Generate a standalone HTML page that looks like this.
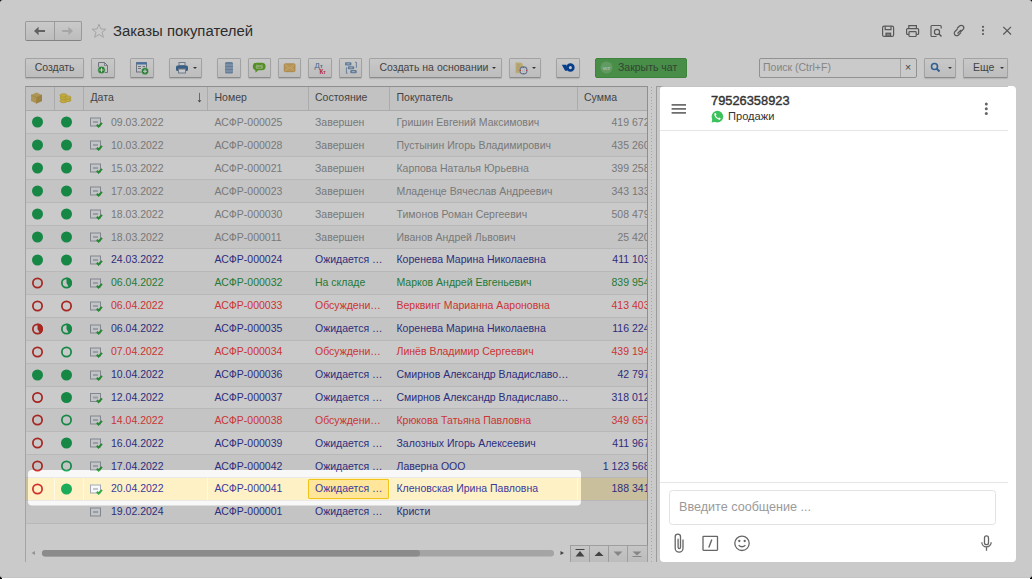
<!DOCTYPE html>
<html><head><meta charset="utf-8">
<style>
*{box-sizing:border-box;margin:0;padding:0}
html,body{width:1032px;height:579px;overflow:hidden;background:#000}
body{font-family:"Liberation Sans",sans-serif;position:relative}
#app{position:absolute;left:0;top:0;width:1032px;height:578px;background:#fff;border-radius:3px;overflow:hidden}
.abs{position:absolute}
.btn{position:absolute;top:58px;height:19.5px;border:1px solid #cdcdcd;border-bottom-color:#b0b0b0;border-radius:1.5px;background:linear-gradient(#fdfdfd,#efefef);box-shadow:0 1px 1px rgba(0,0,0,0.12)}
.btxt{position:absolute;top:1px;font-size:10.5px;color:#555;line-height:14px;white-space:nowrap}
.dd{position:absolute;width:0;height:0;border-left:2px solid transparent;border-right:2px solid transparent;border-top:2.5px solid #444;top:8px}
.hsep{position:absolute;top:87px;width:1px;height:23px;background:#d8d8d8}
.htxt{position:absolute;top:91px;line-height:12px;font-size:10.5px;color:#555;white-space:nowrap}
.t{position:absolute;line-height:12px;font-size:10.5px;white-space:nowrap}
#clip{position:absolute;left:0;top:0;width:1032px;height:579px;clip-path:inset(87px 385px 34px 26px)}
svg{position:absolute;overflow:visible}
</style></head><body>
<div id="app">
  <!-- nav -->
  <div class="abs" style="left:25px;top:21px;width:57px;height:19.5px;border:1px solid #c2c2c2;border-bottom-color:#a6a6a6;border-radius:2px;background:linear-gradient(#fff,#eee)"></div>
  <div class="abs" style="left:54px;top:22px;width:1px;height:17.5px;background:#c4c4c4"></div>
  <svg style="left:0;top:0" width="120" height="50"><path d="M34 31 L38.6 26.7 V29.9 H45 V32.1 H38.6 V35.3 Z" fill="#7c7c7c"/><path d="M73 31 L68.4 26.7 V29.9 H62.2 V32.1 H68.4 V35.3 Z" fill="#d2d2d2"/></svg>
  
  <svg style="left:91px;top:23px" width="16" height="16" viewBox="0 0 16 16"><path d="M8 1.2 L9.9 6 L15 6.2 L11 9.3 L12.4 14.3 L8 11.5 L3.6 14.3 L5 9.3 L1 6.2 L6.1 6 Z" fill="none" stroke="#d0d0d0" stroke-width="1"/></svg>
  <div class="abs" style="left:113px;top:22px;font-size:14.9px;color:#3a3a3a;line-height:18px;white-space:nowrap">Заказы покупателей</div>

  <!-- top right icons -->
  <svg style="left:0;top:0" width="1032" height="50">
    <g fill="none" stroke="#707070" stroke-width="1.2">
      <rect x="882.6" y="26.2" width="11" height="10.2" rx="1.5"/>
      <path d="M885.2 26.2 V29.6 H891 V26.2"/>
      <rect x="886" y="33.2" width="4.6" height="3.2" fill="#a0a0a0"/>
      <path d="M908.8 28.6 V25.6 H916.4 V28.6"/>
      <path d="M909 34.4 H907.6 A1 1 0 0 1 906.6 33.4 V29.6 A1 1 0 0 1 907.6 28.6 H917.6 A1 1 0 0 1 918.6 29.6 V33.4 A1 1 0 0 1 917.6 34.4 H916.2"/>
      <rect x="909" y="31.6" width="7.2" height="4.9" rx="0.8"/>
      <path d="M941.2 28.5 V26.5 A1 1 0 0 0 940.2 25.5 H932 A1 1 0 0 0 931 26.5 V35.5 A1 1 0 0 0 932 36.5 H936.5"/>
      <circle cx="937" cy="32" r="2.6"/>
      <path d="M938.8 33.8 L941.5 36.5" stroke-width="1.5"/>
      <path d="M957.5 29 L955 31.5 A2.3 2.3 0 0 0 958.5 35 L961 32.5 M960.5 32 L963 29.5 A2.3 2.3 0 0 0 959.5 26 L957 28.5 M957.5 33.5 L961 30"/>
      <path d="M1003.3 26.8 L1011 34.5 M1011 26.8 L1003.3 34.5"/>
    </g>
    <g fill="#707070"><circle cx="983" cy="26.8" r="1.1"/><circle cx="983" cy="30.4" r="1.1"/><circle cx="983" cy="34" r="1.1"/></g>
  </svg>

  <!-- toolbar -->
  <div class="btn" style="left:25px;width:59px"><span class="btxt" style="left:8.7px">Создать</span></div>
  <div class="btn" style="left:91px;width:24px"></div>
  <div class="btn" style="left:130px;width:24px"></div>
  <div class="btn" style="left:169px;width:33px"><div class="dd" style="left:23px"></div></div>
  <div class="btn" style="left:217px;width:24px"></div>
  <div class="btn" style="left:248px;width:23px"></div>
  <div class="btn" style="left:278px;width:23px"></div>
  <div class="btn" style="left:308px;width:24px"></div>
  <div class="btn" style="left:339px;width:23px"></div>
  <div class="btn" style="left:369px;width:133px"><span class="btxt" style="left:9.5px">Создать на основании</span><div class="dd" style="left:122px"></div></div>
  <div class="btn" style="left:509px;width:32px"><div class="dd" style="left:22px"></div></div>
  <div class="btn" style="left:556px;width:24px"></div>
  <div class="abs" style="left:595px;top:58px;width:92px;height:20px;border-radius:2px;background:#5cb35c;border:1px solid #4ea64e"><span class="btxt" style="left:22px;color:#415641">Закрыть чат</span></div>
  <svg style="left:0;top:0" width="1032" height="90">
    <!-- doc + plus -->
    <path d="M98.5 62.5 H104.5 L107.5 65.5 V72.5 H98.5 Z" fill="#f6f6f6" stroke="#8a93a0" stroke-width="1"/><path d="M104.5 62.5 V65.5 H107.5" fill="none" stroke="#8a93a0" stroke-width="0.8"/>
    <circle cx="101.5" cy="70" r="3.8" fill="#2e9e3c" stroke="#fff" stroke-width="0.6"/><path d="M99.3 70 H103.7 M101.5 67.8 V72.2" stroke="#fff" stroke-width="1.1"/>
    <!-- window + plus -->
    <rect x="136.5" y="62.5" width="10" height="9.5" fill="#f4f6f8" stroke="#8a93a0"/>
    <rect x="136.5" y="62.5" width="10" height="2" fill="#5a8fd0"/>
    <path d="M138 66.5 H141 M138 68.5 H141 M142.5 66.5 H145" stroke="#8a93a0"/>
    <circle cx="145" cy="71.2" r="3.7" fill="#2e9e3c" stroke="#fff" stroke-width="0.6"/><path d="M143 71.2 H147 M145 69.2 V73.2" stroke="#fff" stroke-width="1.1"/>
    <!-- printer -->
    <rect x="179" y="62.5" width="6" height="3" fill="#fff" stroke="#8a9ab0"/>
    <rect x="176" y="65.5" width="12" height="5.5" rx="1.5" fill="#4a78a8"/>
    <rect x="178.5" y="69" width="7" height="4" fill="#fff" stroke="#8a9ab0"/>
    <!-- db -->
    <rect x="225" y="62" width="8" height="11.5" rx="1.5" fill="#7f9fc0"/>
    <path d="M225 65 H233 M225 68 H233 M225 71 H233" stroke="#c8d6e4" stroke-width="0.8"/>
    <!-- sms -->
    <rect x="252.8" y="62.7" width="12.8" height="7.5" rx="3.7" fill="#6bb52e"/><path d="M255.2 69.5 L255.6 72.8 L258.6 69.8 Z" fill="#6bb52e"/>
    <path d="M256 65.2 h1.6 v1.1 h-1.6 v1.1 h1.6 M258.4 67.4 v-2.2 l0.9 1.2 l0.9 -1.2 v2.2 M262.6 65.2 h-1.6 v1.1 h1.6 v1.1 h-1.6 M256 68.3 H262.6" fill="none" stroke="#eaf5e0" stroke-width="0.55"/>
    <!-- envelope -->
    <rect x="284.2" y="63.8" width="10.8" height="7.9" rx="1" fill="#e9bd6e" stroke="#cf9f4f" stroke-width="0.7"/>
    <path d="M284.8 64.4 L289.6 68.4 L294.4 64.4 M284.8 71.2 L288.2 68 M294.4 71.2 L291 68" fill="none" stroke="#f6dca6" stroke-width="0.7"/>
    <!-- Dt Kt -->
    <text x="314.6" y="67.8" font-size="7.8" fill="#5a82b0" font-family="Liberation Sans">Д</text><text x="320" y="67.8" font-size="5.5" fill="#5a82b0" font-family="Liberation Sans" font-weight="bold">т</text>
    <text x="319.4" y="73.6" font-size="6.3" fill="#e03434" font-family="Liberation Sans" font-weight="bold">К</text><text x="323.2" y="73.6" font-size="5" fill="#e03434" font-family="Liberation Sans" font-weight="bold">т</text>
    <!-- structure -->
    <g fill="#7699bf"><rect x="345" y="62.3" width="6.4" height="3.1" rx="1"/><rect x="347.8" y="66.2" width="6.4" height="3.1" rx="1"/><rect x="350.3" y="70.1" width="6.4" height="3.1" rx="1"/></g>
    <g stroke="#e8eef5" stroke-width="0.8"><path d="M346.6 63.85 H349.8 M349.4 67.75 H352.6 M351.9 71.65 H355.1"/></g>
    <path d="M346.4 67.5 V73.3 H347.6 M355 62.3 H356.4 V67.8" fill="none" stroke="#7699bf" stroke-width="0.9"/>
    <!-- yellow doc + lifebuoy -->
    <path d="M515.5 62.5 H520.5 Q523 63 523 65.5 V73.3 H515.5 Z" fill="#ead796"/>
    <path d="M516.8 64.8 H520 M516.8 66.8 H520 M516.8 68.8 H519 M516.8 70.8 H519" stroke="#d6c078" stroke-width="0.7"/>
    <circle cx="523.5" cy="70.4" r="3.5" fill="#fbfbfb" stroke="#7d8fb5" stroke-width="1.1"/>
    <circle cx="523.5" cy="70.4" r="1.4" fill="none" stroke="#c9d2e2" stroke-width="0.6"/>
    <g fill="#e05050"><circle cx="523.5" cy="67.3" r="0.6"/><circle cx="523.5" cy="73.5" r="0.6"/><circle cx="520.4" cy="70.4" r="0.6"/><circle cx="526.6" cy="70.4" r="0.6"/></g>
    <!-- yookassa -->
    <path d="M561.8 64.7 H566.4 L567.4 70.8 H565.1 Z" fill="#0a4fb0"/>
    <circle cx="570.4" cy="67.6" r="2.9" fill="none" stroke="#0a4fb0" stroke-width="2.7"/>
    <!-- wz circle -->
    <circle cx="606.5" cy="67.6" r="6" fill="#7cc47c"/>
    <text x="606.5" y="69.8" font-size="6.2" fill="#e6f3e6" text-anchor="middle" font-family="Liberation Sans">wz</text>
  </svg>

  <!-- search -->
  <div class="abs" style="left:759px;top:58px;width:158px;height:20px;border:1px solid #b8b8b8;border-radius:2px;background:#fff"><span class="btxt" style="left:3px;color:#a8a8a8">Поиск (Ctrl+F)</span><div class="abs" style="left:140px;top:0;width:1px;height:18px;background:#cfcfcf"></div><span class="btxt" style="left:145px;color:#555">×</span></div>
  <div class="btn" style="left:924px;width:32px"><div class="dd" style="left:23px"></div></div>
  <svg style="left:0;top:0" width="1032" height="90"><circle cx="934.5" cy="66.5" r="3" fill="none" stroke="#3d78b8" stroke-width="1.6"/><path d="M936.6 68.6 L939.5 71.5" stroke="#3d78b8" stroke-width="2"/></svg>
  <div class="btn" style="left:963px;width:45px"><span class="btxt" style="left:9px">Еще</span><div class="dd" style="left:36px"></div></div>

  <!-- grid -->
  <div class="abs" style="left:25px;top:86px;width:623px;height:459px;border:1px solid #b4b4b4;border-left-color:#cfcfcf;border-bottom:none"></div>
  <div class="abs" style="left:25px;top:545px;width:1px;height:17px;background:#cfcfcf"></div>
  <div class="abs" style="left:26px;top:87px;width:621px;height:23px;background:#f5f5f5"></div>
  <div class="abs" style="left:26px;top:110px;width:621px;height:1px;background:#d8d8d8"></div>
  <div class="hsep" style="left:54px"></div>
  <div class="hsep" style="left:83px"></div>
  <div class="hsep" style="left:207px"></div>
  <div class="hsep" style="left:308px"></div>
  <div class="hsep" style="left:389px"></div>
  <div class="hsep" style="left:577px"></div>
  <span class="htxt" style="left:90.5px">Дата</span>
  <svg style="left:0;top:0" width="1032" height="110"><path d="M199.5 92.8 V100.6" stroke="#7d8894" stroke-width="1"/><path d="M197.6 100.2 H201.4 L199.5 102.4 Z" fill="#555d66"/></svg>
  <span class="htxt" style="left:214.5px">Номер</span>
  <span class="htxt" style="left:315px">Состояние</span>
  <span class="htxt" style="left:396.5px">Покупатель</span>
  <span class="htxt" style="left:584px">Сумма</span>
  <svg style="left:0;top:0" width="1032" height="110">
    <path d="M31 95 L36.5 92.5 L42 95 V101 L36.5 103.5 L31 101 Z" fill="#d9bd6e"/><path d="M36.5 97.5 L42 95 V101 L36.5 103.5 Z" fill="#c4a455"/>
    <path d="M31 95 L36.5 97.5 L42 95 M36.5 97.5 V103.5" fill="none" stroke="#c8a850" stroke-width="0.8"/>
    <g fill="#f0d858" stroke="#d8b830" stroke-width="0.7">
      <ellipse cx="63.5" cy="101" rx="3.5" ry="1.8"/><ellipse cx="63.5" cy="98" rx="3.5" ry="1.8"/><ellipse cx="63.5" cy="95.5" rx="3.5" ry="1.8"/>
      <ellipse cx="68" cy="100" rx="3" ry="1.6"/><ellipse cx="68" cy="97.5" rx="3" ry="1.6"/>
    </g>
  </svg>

  <div id="clip">
<div class="abs" style="left:26px;top:133px;width:622px;height:1px;background:#e9e9e9"></div>
<div class="t" style="left:111px;top:116.0px;color:#999999">09.03.2022</div>
<div class="t" style="left:214.5px;top:116.0px;color:#999999">АСФР-000025</div>
<div class="t" style="left:315px;top:116.0px;color:#999999">Завершен</div>
<div class="t" style="left:396.5px;top:116.0px;color:#999999">Гришин Евгений Максимович</div>
<div class="t" style="right:382.5px;top:116.0px;color:#999999;text-align:right">419 672</div>
<div class="abs" style="left:26px;top:134px;width:622px;height:22px;background:#f8f8f8"></div>
<div class="abs" style="left:26px;top:156px;width:622px;height:1px;background:#e9e9e9"></div>
<div class="t" style="left:111px;top:138.9px;color:#999999">10.03.2022</div>
<div class="t" style="left:214.5px;top:138.9px;color:#999999">АСФР-000028</div>
<div class="t" style="left:315px;top:138.9px;color:#999999">Завершен</div>
<div class="t" style="left:396.5px;top:138.9px;color:#999999">Пустынин Игорь Владимирович</div>
<div class="t" style="right:382.5px;top:138.9px;color:#999999;text-align:right">435 260</div>
<div class="abs" style="left:26px;top:179px;width:622px;height:1px;background:#e9e9e9"></div>
<div class="t" style="left:111px;top:161.8px;color:#999999">15.03.2022</div>
<div class="t" style="left:214.5px;top:161.8px;color:#999999">АСФР-000021</div>
<div class="t" style="left:315px;top:161.8px;color:#999999">Завершен</div>
<div class="t" style="left:396.5px;top:161.8px;color:#999999">Карпова Наталья Юрьевна</div>
<div class="t" style="right:382.5px;top:161.8px;color:#999999;text-align:right">399 258</div>
<div class="abs" style="left:26px;top:180px;width:622px;height:22px;background:#f8f8f8"></div>
<div class="abs" style="left:26px;top:202px;width:622px;height:1px;background:#e9e9e9"></div>
<div class="t" style="left:111px;top:184.7px;color:#999999">17.03.2022</div>
<div class="t" style="left:214.5px;top:184.7px;color:#999999">АСФР-000023</div>
<div class="t" style="left:315px;top:184.7px;color:#999999">Завершен</div>
<div class="t" style="left:396.5px;top:184.7px;color:#999999">Младенце Вячеслав Андреевич</div>
<div class="t" style="right:382.5px;top:184.7px;color:#999999;text-align:right">343 133</div>
<div class="abs" style="left:26px;top:225px;width:622px;height:1px;background:#e9e9e9"></div>
<div class="t" style="left:111px;top:207.6px;color:#999999">18.03.2022</div>
<div class="t" style="left:214.5px;top:207.6px;color:#999999">АСФР-000030</div>
<div class="t" style="left:315px;top:207.6px;color:#999999">Завершен</div>
<div class="t" style="left:396.5px;top:207.6px;color:#999999">Тимонов Роман Сергеевич</div>
<div class="t" style="right:382.5px;top:207.6px;color:#999999;text-align:right">508 479</div>
<div class="abs" style="left:26px;top:226px;width:622px;height:22px;background:#f8f8f8"></div>
<div class="abs" style="left:26px;top:248px;width:622px;height:1px;background:#e9e9e9"></div>
<div class="t" style="left:111px;top:230.5px;color:#999999">18.03.2022</div>
<div class="t" style="left:214.5px;top:230.5px;color:#999999">АСФР-000011</div>
<div class="t" style="left:315px;top:230.5px;color:#999999">Завершен</div>
<div class="t" style="left:396.5px;top:230.5px;color:#999999">Иванов Андрей Львович</div>
<div class="t" style="right:382.5px;top:230.5px;color:#999999;text-align:right">25 420</div>
<div class="abs" style="left:26px;top:271px;width:622px;height:1px;background:#e9e9e9"></div>
<div class="t" style="left:111px;top:253.4px;color:#3a3a9c">24.03.2022</div>
<div class="t" style="left:214.5px;top:253.4px;color:#3a3a9c">АСФР-000024</div>
<div class="t" style="left:315px;top:253.4px;color:#3a3a9c">Ожидается …</div>
<div class="t" style="left:396.5px;top:253.4px;color:#3a3a9c">Коренева Марина Николаевна</div>
<div class="t" style="right:382.5px;top:253.4px;color:#3a3a9c;text-align:right">411 103</div>
<div class="abs" style="left:26px;top:272px;width:622px;height:22px;background:#f8f8f8"></div>
<div class="abs" style="left:26px;top:294px;width:622px;height:1px;background:#e9e9e9"></div>
<div class="t" style="left:111px;top:276.3px;color:#2e9a46">06.04.2022</div>
<div class="t" style="left:214.5px;top:276.3px;color:#2e9a46">АСФР-000032</div>
<div class="t" style="left:315px;top:276.3px;color:#2e9a46">На складе</div>
<div class="t" style="left:396.5px;top:276.3px;color:#2e9a46">Марков Андрей Евгеньевич</div>
<div class="t" style="right:382.5px;top:276.3px;color:#2e9a46;text-align:right">839 954</div>
<div class="abs" style="left:26px;top:317px;width:622px;height:1px;background:#e9e9e9"></div>
<div class="t" style="left:111px;top:299.2px;color:#ff4444">06.04.2022</div>
<div class="t" style="left:214.5px;top:299.2px;color:#ff4444">АСФР-000033</div>
<div class="t" style="left:315px;top:299.2px;color:#ff4444">Обсуждени…</div>
<div class="t" style="left:396.5px;top:299.2px;color:#ff4444">Верквинг Марианна Аароновна</div>
<div class="t" style="right:382.5px;top:299.2px;color:#ff4444;text-align:right">413 403</div>
<div class="abs" style="left:26px;top:318px;width:622px;height:22px;background:#f8f8f8"></div>
<div class="abs" style="left:26px;top:340px;width:622px;height:1px;background:#e9e9e9"></div>
<div class="t" style="left:111px;top:322.1px;color:#3a3a9c">06.04.2022</div>
<div class="t" style="left:214.5px;top:322.1px;color:#3a3a9c">АСФР-000035</div>
<div class="t" style="left:315px;top:322.1px;color:#3a3a9c">Ожидается …</div>
<div class="t" style="left:396.5px;top:322.1px;color:#3a3a9c">Коренева Марина Николаевна</div>
<div class="t" style="right:382.5px;top:322.1px;color:#3a3a9c;text-align:right">116 224</div>
<div class="abs" style="left:26px;top:363px;width:622px;height:1px;background:#e9e9e9"></div>
<div class="t" style="left:111px;top:345.0px;color:#ff4444">07.04.2022</div>
<div class="t" style="left:214.5px;top:345.0px;color:#ff4444">АСФР-000034</div>
<div class="t" style="left:315px;top:345.0px;color:#ff4444">Обсуждени…</div>
<div class="t" style="left:396.5px;top:345.0px;color:#ff4444">Линёв Владимир Сергеевич</div>
<div class="t" style="right:382.5px;top:345.0px;color:#ff4444;text-align:right">439 194</div>
<div class="abs" style="left:26px;top:364px;width:622px;height:22px;background:#f8f8f8"></div>
<div class="abs" style="left:26px;top:386px;width:622px;height:1px;background:#e9e9e9"></div>
<div class="t" style="left:111px;top:367.9px;color:#3a3a9c">10.04.2022</div>
<div class="t" style="left:214.5px;top:367.9px;color:#3a3a9c">АСФР-000036</div>
<div class="t" style="left:315px;top:367.9px;color:#3a3a9c">Ожидается …</div>
<div class="t" style="left:396.5px;top:367.9px;color:#3a3a9c">Смирнов Александр Владиславо…</div>
<div class="t" style="right:382.5px;top:367.9px;color:#3a3a9c;text-align:right">42 797</div>
<div class="abs" style="left:26px;top:408px;width:622px;height:1px;background:#e9e9e9"></div>
<div class="t" style="left:111px;top:390.8px;color:#3a3a9c">12.04.2022</div>
<div class="t" style="left:214.5px;top:390.8px;color:#3a3a9c">АСФР-000037</div>
<div class="t" style="left:315px;top:390.8px;color:#3a3a9c">Ожидается …</div>
<div class="t" style="left:396.5px;top:390.8px;color:#3a3a9c">Смирнов Александр Владиславо…</div>
<div class="t" style="right:382.5px;top:390.8px;color:#3a3a9c;text-align:right">318 012</div>
<div class="abs" style="left:26px;top:409px;width:622px;height:22px;background:#f8f8f8"></div>
<div class="abs" style="left:26px;top:431px;width:622px;height:1px;background:#e9e9e9"></div>
<div class="t" style="left:111px;top:413.7px;color:#ff4444">14.04.2022</div>
<div class="t" style="left:214.5px;top:413.7px;color:#ff4444">АСФР-000038</div>
<div class="t" style="left:315px;top:413.7px;color:#ff4444">Обсуждени…</div>
<div class="t" style="left:396.5px;top:413.7px;color:#ff4444">Крюкова Татьяна Павловна</div>
<div class="t" style="right:382.5px;top:413.7px;color:#ff4444;text-align:right">349 657</div>
<div class="abs" style="left:26px;top:454px;width:622px;height:1px;background:#e9e9e9"></div>
<div class="t" style="left:111px;top:436.6px;color:#3a3a9c">16.04.2022</div>
<div class="t" style="left:214.5px;top:436.6px;color:#3a3a9c">АСФР-000039</div>
<div class="t" style="left:315px;top:436.6px;color:#3a3a9c">Ожидается …</div>
<div class="t" style="left:396.5px;top:436.6px;color:#3a3a9c">Залозных Игорь Алексеевич</div>
<div class="t" style="right:382.5px;top:436.6px;color:#3a3a9c;text-align:right">411 967</div>
<div class="abs" style="left:26px;top:455px;width:622px;height:22px;background:#f8f8f8"></div>
<div class="abs" style="left:26px;top:477px;width:622px;height:1px;background:#e9e9e9"></div>
<div class="t" style="left:111px;top:459.5px;color:#3a3a9c">17.04.2022</div>
<div class="t" style="left:214.5px;top:459.5px;color:#3a3a9c">АСФР-000042</div>
<div class="t" style="left:315px;top:459.5px;color:#3a3a9c">Ожидается …</div>
<div class="t" style="left:396.5px;top:459.5px;color:#3a3a9c">Лаверна ООО</div>
<div class="t" style="right:382.5px;top:459.5px;color:#3a3a9c;text-align:right">1 123 568</div>
<div class="abs" style="left:26px;top:500px;width:622px;height:1px;background:#e9e9e9"></div>
<div class="abs" style="left:26px;top:478px;width:622px;height:22px;background:#fff1c6"></div>
<div class="abs" style="left:54px;top:478px;width:1px;height:22px;background:rgba(255,255,255,0.55)"></div>
<div class="abs" style="left:83px;top:478px;width:1px;height:22px;background:rgba(255,255,255,0.55)"></div>
<div class="abs" style="left:207px;top:478px;width:1px;height:22px;background:rgba(255,255,255,0.55)"></div>
<div class="abs" style="left:308px;top:478px;width:1px;height:22px;background:rgba(255,255,255,0.55)"></div>
<div class="abs" style="left:389px;top:478px;width:1px;height:22px;background:rgba(255,255,255,0.55)"></div>
<div class="abs" style="left:577px;top:478px;width:1px;height:22px;background:rgba(255,255,255,0.55)"></div>
<div class="abs" style="left:308px;top:479px;width:81px;height:20px;background:#ffe69a;border:1.5px solid #f3c41a;border-radius:1px"></div>
<div class="t" style="left:111px;top:482.4px;color:#3a3a9c">20.04.2022</div>
<div class="t" style="left:214.5px;top:482.4px;color:#3a3a9c">АСФР-000041</div>
<div class="t" style="left:315px;top:482.4px;color:#3a3a9c">Ожидается …</div>
<div class="t" style="left:396.5px;top:482.4px;color:#3a3a9c">Кленовская Ирина Павловна</div>
<div class="t" style="right:382.5px;top:482.4px;color:#3a3a9c;text-align:right">188 341</div>
<div class="abs" style="left:26px;top:501px;width:622px;height:22px;background:#f8f8f8"></div>
<div class="abs" style="left:26px;top:523px;width:622px;height:1px;background:#e9e9e9"></div>
<div class="t" style="left:111px;top:505.3px;color:#3a3a9c">19.02.2024</div>
<div class="t" style="left:214.5px;top:505.3px;color:#3a3a9c">АСФР-000001</div>
<div class="t" style="left:315px;top:505.3px;color:#3a3a9c">Ожидается …</div>
<div class="t" style="left:396.5px;top:505.3px;color:#3a3a9c">Кристи</div>
  <svg style="left:0;top:0" width="1032" height="579">
<circle cx="37.5" cy="122.0" r="5.5" fill="#1cab58"/>
<circle cx="66.5" cy="122.0" r="5.5" fill="#1cab58"/>
<rect x="90.5" y="118.0" width="10" height="8" fill="#f7f8fa" stroke="#a3aab5" stroke-width="1"/><rect x="93" y="121.0" width="5" height="2" fill="#c3c8cf"/><path d="M96.8 124.7 L98.6 126.5 L102 122.9" fill="none" stroke="#2fae3f" stroke-width="2"/>
<circle cx="37.5" cy="145.0" r="5.5" fill="#1cab58"/>
<circle cx="66.5" cy="145.0" r="5.5" fill="#1cab58"/>
<rect x="90.5" y="141.0" width="10" height="8" fill="#f7f8fa" stroke="#a3aab5" stroke-width="1"/><rect x="93" y="144.0" width="5" height="2" fill="#c3c8cf"/><path d="M96.8 147.7 L98.6 149.5 L102 145.9" fill="none" stroke="#2fae3f" stroke-width="2"/>
<circle cx="37.5" cy="168.0" r="5.5" fill="#1cab58"/>
<circle cx="66.5" cy="168.0" r="5.5" fill="#1cab58"/>
<rect x="90.5" y="164.0" width="10" height="8" fill="#f7f8fa" stroke="#a3aab5" stroke-width="1"/><rect x="93" y="167.0" width="5" height="2" fill="#c3c8cf"/><path d="M96.8 170.7 L98.6 172.5 L102 168.9" fill="none" stroke="#2fae3f" stroke-width="2"/>
<circle cx="37.5" cy="191.0" r="5.5" fill="#1cab58"/>
<circle cx="66.5" cy="191.0" r="5.5" fill="#1cab58"/>
<rect x="90.5" y="187.0" width="10" height="8" fill="#f7f8fa" stroke="#a3aab5" stroke-width="1"/><rect x="93" y="190.0" width="5" height="2" fill="#c3c8cf"/><path d="M96.8 193.7 L98.6 195.5 L102 191.9" fill="none" stroke="#2fae3f" stroke-width="2"/>
<circle cx="37.5" cy="214.0" r="5.5" fill="#1cab58"/>
<circle cx="66.5" cy="214.0" r="5.5" fill="#1cab58"/>
<rect x="90.5" y="210.0" width="10" height="8" fill="#f7f8fa" stroke="#a3aab5" stroke-width="1"/><rect x="93" y="213.0" width="5" height="2" fill="#c3c8cf"/><path d="M96.8 216.7 L98.6 218.5 L102 214.9" fill="none" stroke="#2fae3f" stroke-width="2"/>
<circle cx="37.5" cy="237.0" r="5.5" fill="#1cab58"/>
<circle cx="66.5" cy="237.0" r="5.5" fill="#1cab58"/>
<rect x="90.5" y="233.0" width="10" height="8" fill="#f7f8fa" stroke="#a3aab5" stroke-width="1"/><rect x="93" y="236.0" width="5" height="2" fill="#c3c8cf"/><path d="M96.8 239.7 L98.6 241.5 L102 237.9" fill="none" stroke="#2fae3f" stroke-width="2"/>
<circle cx="37.5" cy="260.0" r="5.5" fill="#1cab58"/>
<circle cx="66.5" cy="260.0" r="5.5" fill="#1cab58"/>
<rect x="90.5" y="256.0" width="10" height="8" fill="#f7f8fa" stroke="#a3aab5" stroke-width="1"/><rect x="93" y="259.0" width="5" height="2" fill="#c3c8cf"/><path d="M96.8 262.7 L98.6 264.5 L102 260.9" fill="none" stroke="#2fae3f" stroke-width="2"/>
<circle cx="37.5" cy="283.0" r="4.625" fill="none" stroke="#d2302b" stroke-width="1.75"/>
<circle cx="66.5" cy="283.0" r="4.625" fill="none" stroke="#1cab58" stroke-width="1.75"/><path d="M66.5 283.0 L66.5 277.5 A5.5 5.5 0 0 1 69.25 287.76 Z" fill="#1cab58"/>
<rect x="90.5" y="279.0" width="10" height="8" fill="#f7f8fa" stroke="#a3aab5" stroke-width="1"/><rect x="93" y="282.0" width="5" height="2" fill="#c3c8cf"/><path d="M96.8 285.7 L98.6 287.5 L102 283.9" fill="none" stroke="#2fae3f" stroke-width="2"/>
<circle cx="37.5" cy="306.0" r="4.625" fill="none" stroke="#d2302b" stroke-width="1.75"/>
<circle cx="66.5" cy="306.0" r="4.625" fill="none" stroke="#d2302b" stroke-width="1.75"/>
<rect x="90.5" y="302.0" width="10" height="8" fill="#f7f8fa" stroke="#a3aab5" stroke-width="1"/><rect x="93" y="305.0" width="5" height="2" fill="#c3c8cf"/><path d="M96.8 308.7 L98.6 310.5 L102 306.9" fill="none" stroke="#2fae3f" stroke-width="2"/>
<circle cx="37.5" cy="329.0" r="4.625" fill="none" stroke="#d2302b" stroke-width="1.75"/><path d="M37.5 329.0 L37.5 323.5 A5.5 5.5 0 0 1 40.25 333.76 Z" fill="#d2302b"/>
<circle cx="66.5" cy="329.0" r="4.625" fill="none" stroke="#1cab58" stroke-width="1.75"/><path d="M66.5 329.0 L66.5 323.5 A5.5 5.5 0 0 1 69.25 333.76 Z" fill="#1cab58"/>
<rect x="90.5" y="325.0" width="10" height="8" fill="#f7f8fa" stroke="#a3aab5" stroke-width="1"/><rect x="93" y="328.0" width="5" height="2" fill="#c3c8cf"/><path d="M96.8 331.7 L98.6 333.5 L102 329.9" fill="none" stroke="#2fae3f" stroke-width="2"/>
<circle cx="37.5" cy="352.0" r="4.625" fill="none" stroke="#d2302b" stroke-width="1.75"/>
<circle cx="66.5" cy="352.0" r="4.625" fill="none" stroke="#1cab58" stroke-width="1.75"/>
<rect x="90.5" y="348.0" width="10" height="8" fill="#f7f8fa" stroke="#a3aab5" stroke-width="1"/><rect x="93" y="351.0" width="5" height="2" fill="#c3c8cf"/><path d="M96.8 354.7 L98.6 356.5 L102 352.9" fill="none" stroke="#2fae3f" stroke-width="2"/>
<circle cx="37.5" cy="375.0" r="5.5" fill="#1cab58"/>
<circle cx="66.5" cy="375.0" r="5.5" fill="#1cab58"/>
<rect x="90.5" y="371.0" width="10" height="8" fill="#f7f8fa" stroke="#a3aab5" stroke-width="1"/><rect x="93" y="374.0" width="5" height="2" fill="#c3c8cf"/><path d="M96.8 377.7 L98.6 379.5 L102 375.9" fill="none" stroke="#2fae3f" stroke-width="2"/>
<circle cx="37.5" cy="397.5" r="4.625" fill="none" stroke="#d2302b" stroke-width="1.75"/>
<circle cx="66.5" cy="397.5" r="5.5" fill="#1cab58"/>
<rect x="90.5" y="393.5" width="10" height="8" fill="#f7f8fa" stroke="#a3aab5" stroke-width="1"/><rect x="93" y="396.5" width="5" height="2" fill="#c3c8cf"/><path d="M96.8 400.2 L98.6 402.0 L102 398.4" fill="none" stroke="#2fae3f" stroke-width="2"/>
<circle cx="37.5" cy="420.0" r="4.625" fill="none" stroke="#d2302b" stroke-width="1.75"/>
<circle cx="66.5" cy="420.0" r="4.625" fill="none" stroke="#1cab58" stroke-width="1.75"/>
<rect x="90.5" y="416.0" width="10" height="8" fill="#f7f8fa" stroke="#a3aab5" stroke-width="1"/><rect x="93" y="419.0" width="5" height="2" fill="#c3c8cf"/><path d="M96.8 422.7 L98.6 424.5 L102 420.9" fill="none" stroke="#2fae3f" stroke-width="2"/>
<circle cx="37.5" cy="443.0" r="4.625" fill="none" stroke="#d2302b" stroke-width="1.75"/>
<circle cx="66.5" cy="443.0" r="5.5" fill="#1cab58"/>
<rect x="90.5" y="439.0" width="10" height="8" fill="#f7f8fa" stroke="#a3aab5" stroke-width="1"/><rect x="93" y="442.0" width="5" height="2" fill="#c3c8cf"/><path d="M96.8 445.7 L98.6 447.5 L102 443.9" fill="none" stroke="#2fae3f" stroke-width="2"/>
<circle cx="37.5" cy="466.0" r="4.625" fill="none" stroke="#d2302b" stroke-width="1.75"/>
<circle cx="66.5" cy="466.0" r="4.625" fill="none" stroke="#1cab58" stroke-width="1.75"/>
<rect x="90.5" y="462.0" width="10" height="8" fill="#f7f8fa" stroke="#a3aab5" stroke-width="1"/><rect x="93" y="465.0" width="5" height="2" fill="#c3c8cf"/><path d="M96.8 468.7 L98.6 470.5 L102 466.9" fill="none" stroke="#2fae3f" stroke-width="2"/>
<circle cx="37.5" cy="489.0" r="4.625" fill="none" stroke="#d2302b" stroke-width="1.75"/>
<circle cx="66.5" cy="489.0" r="5.5" fill="#1cab58"/>
<rect x="90.5" y="485.0" width="10" height="8" fill="#f7f8fa" stroke="#a3aab5" stroke-width="1"/><rect x="93" y="488.0" width="5" height="2" fill="#c3c8cf"/><path d="M96.8 491.7 L98.6 493.5 L102 489.9" fill="none" stroke="#2fae3f" stroke-width="2"/>


<rect x="90.5" y="508.0" width="10" height="8" fill="#f7f8fa" stroke="#a3aab5" stroke-width="1"/><rect x="93" y="511.0" width="5" height="2" fill="#c3c8cf"/>
  </svg>
  </div>

  <!-- scrollbar -->
  <svg style="left:0;top:0" width="1032" height="579">
    <path d="M35 551 L31.5 553 L35 555 Z" fill="#bbb"/>
    <rect x="42" y="550" width="512" height="6.5" rx="3.2" fill="#d0d0d0"/>
    <rect x="42" y="550" width="378" height="6.5" rx="3.2" fill="#b0b0b0"/>
    <path d="M560.5 551 L564 553 L560.5 555 Z" fill="#555"/>
  </svg>
  <div class="abs" style="left:570px;top:545px;width:78px;height:17px;border:1px solid #c8c8c8;border-bottom:none;background:linear-gradient(#fafafa,#eeeeee)"></div>
  <div class="abs" style="left:589px;top:545px;width:1px;height:17px;background:#c8c8c8"></div>
  <div class="abs" style="left:608px;top:545px;width:1px;height:17px;background:#c8c8c8"></div>
  <div class="abs" style="left:627px;top:545px;width:1px;height:17px;background:#c8c8c8"></div>
  <svg style="left:0;top:0" width="1032" height="579">
    <path d="M575.5 549.5 H584.5" stroke="#555" stroke-width="1"/><path d="M575.5 556.5 L580 551 L584.5 556.5 Z" fill="#555"/>
    <path d="M594.5 556 L599 551.5 L603.5 556 Z" fill="#555"/>
    <path d="M613.5 551.5 L618 556 L622.5 551.5 Z" fill="#aaa"/>
    <path d="M632.5 551.5 L637 555.5 L641.5 551.5 Z" fill="#aaa"/><path d="M632.5 556.5 H641.5" stroke="#aaa" stroke-width="1"/>
  </svg>

  <!-- splitter -->
  <div class="abs" style="left:651px;top:87px;width:1px;height:475px;background:repeating-linear-gradient(#d2d2d2 0 1px,transparent 1px 3.2px)"></div>

  <!-- chat frame -->
  <div class="abs" style="left:656px;top:86px;width:352px;height:476px;border:1px solid #c4c4c4;border-right:none;border-bottom:none"></div>
  <div class="abs" style="left:660px;top:87px;width:348px;height:475px;background:#fff;border-radius:3px 0 0 3px">
  </div>
  <!-- chat content -->
  <svg style="left:0;top:0" width="1032" height="579">
    <path d="M671.6 104.9 H686 M671.6 108.9 H686 M671.6 112.8 H686" stroke="#6e6e6e" stroke-width="1.7"/>
    <circle cx="986.3" cy="104" r="1.5" fill="#666"/><circle cx="986.3" cy="108.8" r="1.5" fill="#666"/><circle cx="986.3" cy="113.6" r="1.5" fill="#666"/>
    <circle cx="717.4" cy="116.6" r="5.8" fill="#3cc25c"/>
    <path d="M711.6 122.6 L712.6 118.3 L716.2 121.6 Z" fill="#3cc25c"/>
    <path d="M714.3 113.6 Q713.8 117.8 719.6 120 L720.8 118.6 L719.3 117.4 L718.3 118.2 Q716.2 117.2 715.7 115.2 L716.6 114.4 L715.6 112.9 Z" fill="#fff"/>
    <rect x="660" y="130" width="348" height="1" fill="#e6e6e6"/>
    <rect x="660" y="482" width="348" height="1" fill="#e6e6e6"/>
    <rect x="669.5" y="490.5" width="326" height="34" rx="3" fill="#fff" stroke="#e2e2e2"/>
  </svg>
  <div class="abs" style="left:711px;top:94px;font-size:12.85px;-webkit-text-stroke:0.4px #333;color:#333;line-height:14px;white-space:nowrap">79526358923</div>
  <div class="abs" style="left:728px;top:110px;font-size:11.1px;color:#333;line-height:13px;white-space:nowrap">Продажи</div>
  <div class="abs" style="left:679px;top:500px;font-size:12.6px;color:#9a9a9a;line-height:14px;white-space:nowrap">Введите сообщение ...</div>
  <svg style="left:0;top:0" width="1032" height="579">
    <g fill="none" stroke="#666" stroke-width="1.3">
      <path d="M683 539.5 V548.2 A3.9 3.9 0 0 1 675.2 548.2 V536.8 A2.65 2.65 0 0 1 680.5 536.8 V547.3 A1.2 1.2 0 0 1 678.1 547.3 V538.8"/>
      <rect x="703" y="536.3" width="14.5" height="14" rx="0.5"/>
      <path d="M711.8 539.5 L708.8 547.5" stroke-width="1.4"/>
      <circle cx="742" cy="543.3" r="7.2"/>
      <path d="M738.6 545.3 Q742 548.2 745.4 545.3"/>
      <path d="M981.8 542.2 A4.7 4.7 0 0 0 991.2 542.2 M986.5 546.9 V550.8"/>
    </g>
    <g fill="#666"><circle cx="739.3" cy="541" r="1.15"/><circle cx="744.7" cy="541" r="1.15"/></g>
    <rect x="984.5" y="535.9" width="4" height="8.8" rx="2" fill="none" stroke="#666" stroke-width="1.3"/>
  </svg>

  <!-- overlay -->
  <svg style="left:0;top:0" width="1032" height="579">
    <path fill-rule="evenodd" fill="rgba(0,0,0,0.208)" d="M0 0 H1032 V579 H0 Z
      M32 470 H577 A4 4 0 0 1 581 474 V501.6 A4 4 0 0 1 577 505.6 H32 A4 4 0 0 1 28 501.6 V474 A4 4 0 0 1 32 470 Z
      M664 86 H1012 A4 4 0 0 1 1016 90 V558 A4 4 0 0 1 1012 562 H664 A4 4 0 0 1 660 558 V90 A4 4 0 0 1 664 86 Z"/>
  </svg>
  <div class="abs" style="left:2px;top:577px;width:1028px;height:1px;background:#c4c4c4"></div>
</div>
<div class="abs" style="left:2px;top:578px;width:1028px;height:1px;background:#fff"></div>
</body></html>
